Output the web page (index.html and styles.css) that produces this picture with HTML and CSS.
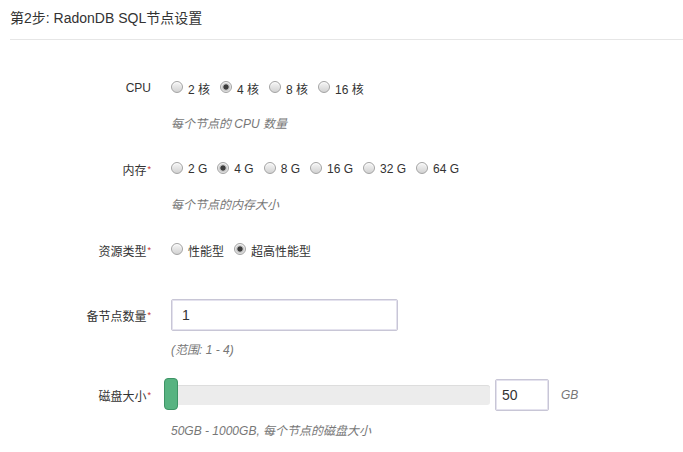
FILE: index.html
```html
<!DOCTYPE html>
<html lang="zh-CN">
<head>
<meta charset="utf-8">
<title>RadonDB SQL节点设置</title>
<link rel="stylesheet" href="styles.css">
</head>
<body>
<div class="step-header">第2步: RadonDB SQL节点设置</div>
<form class="form">
  <div class="group g-cpu">
    <label class="label">CPU</label>
    <div class="controls">
      <div class="radio-line">
        <label class="opt"><input type="radio" name="cpu" class="radio"><span>2 核</span></label>
        <label class="opt"><input type="radio" name="cpu" class="radio" checked><span>4 核</span></label>
        <label class="opt"><input type="radio" name="cpu" class="radio"><span>8 核</span></label>
        <label class="opt"><input type="radio" name="cpu" class="radio"><span>16 核</span></label>
      </div>
      <div class="help help-radio">每个节点的 CPU 数量</div>
    </div>
  </div>
  <div class="group g-mem">
    <label class="label">内存<i class="req">*</i></label>
    <div class="controls">
      <div class="radio-line">
        <label class="opt"><input type="radio" name="mem" class="radio"><span>2 G</span></label>
        <label class="opt"><input type="radio" name="mem" class="radio" checked><span>4 G</span></label>
        <label class="opt"><input type="radio" name="mem" class="radio"><span>8 G</span></label>
        <label class="opt"><input type="radio" name="mem" class="radio"><span>16 G</span></label>
        <label class="opt"><input type="radio" name="mem" class="radio"><span>32 G</span></label>
        <label class="opt"><input type="radio" name="mem" class="radio"><span>64 G</span></label>
      </div>
      <div class="help help-radio">每个节点的内存大小</div>
    </div>
  </div>
  <div class="group g-type">
    <label class="label">资源类型<i class="req">*</i></label>
    <div class="controls">
      <div class="radio-line">
        <label class="opt"><input type="radio" name="type" class="radio"><span>性能型</span></label>
        <label class="opt"><input type="radio" name="type" class="radio" checked><span>超高性能型</span></label>
      </div>
    </div>
  </div>
  <div class="group g-count">
    <label class="label label-input">备节点数量<i class="req">*</i></label>
    <div class="controls">
      <input type="text" class="text-input count-input" value="1">
      <div class="help help-input">(范围: 1 - 4)</div>
    </div>
  </div>
  <div class="group g-disk">
    <label class="label label-input">磁盘大小<i class="req">*</i></label>
    <div class="controls">
      <div class="slider-line">
        <div class="slider">
          <div class="track"></div>
          <div class="thumb"></div>
        </div>
        <input type="text" class="text-input size-input" value="50">
        <span class="unit">GB</span>
      </div>
      <div class="help help-disk">50GB - 1000GB, 每个节点的磁盘大小</div>
    </div>
  </div>
</form>
</body>
</html>
```

FILE: styles.css
```css
html, body {
  margin: 0;
  padding: 0;
  background: #ffffff;
}
body {
  font-family: "Liberation Sans", Arial, "Noto Sans CJK SC", sans-serif;
  color: #333333;
  font-size: 12px;
}
.step-header {
  margin-left: 10px;
  padding-top: 8px;
  padding-bottom: 11px;
  line-height: 20px;
  font-size: 14px;
  color: #333;
  border-bottom: 1px solid #e6e6e6;
}
.form {
  padding-top: 38px;
}
.group {
  display: flex;
  align-items: flex-start;
}
.label {
  width: 141px;
  margin-left: 10px;
  text-align: right;
  line-height: 20px;
  font-size: 12px;
  color: #333;
  flex: none;
}
.label-input {
  line-height: 32px;
}
.req {
  font-style: normal;
  color: #c9302c;
  font-size: 9px;
  vertical-align: 3px;
  margin-left: 1px;
}
.controls {
  margin-left: 20px;
  display: flex;
  flex-direction: column;
}
.radio-line {
  display: flex;
  align-items: center;
  height: 20px;
  gap: 10px;
}
.opt {
  display: flex;
  align-items: center;
  gap: 5px;
  font-size: 12px;
  color: #333;
  white-space: nowrap;
}
.radio {
  appearance: none;
  -webkit-appearance: none;
  margin: 0;
  width: 12px;
  height: 12px;
  box-sizing: border-box;
  border-radius: 50%;
  border: 1px solid #a3a3a3;
  background: linear-gradient(#f6f6f6, #d2d2d2);
  box-shadow: inset 0 1px 1px rgba(255,255,255,0.8);
  position: relative;
  top: -1px;
}
.radio:checked {
  background: radial-gradient(circle, #3c3c3c 0, #3c3c3c 2.2px, #bdbdbd 3px, #e9e9e9 5px);
}
.help {
  font-style: italic;
  color: #777;
  font-size: 12px;
  line-height: 18px;
  white-space: nowrap;
}
.help-radio {
  margin-top: 17px;
}
.help-input {
  margin-top: 10px;
}
.help-disk {
  margin-top: 11px;
}
.g-cpu, .g-mem {
  margin-bottom: 26px;
}
.g-type {
  margin-bottom: 37px;
}
.g-count {
  margin-bottom: 20px;
}
.text-input {
  box-sizing: border-box;
  height: 32px;
  border: 1px solid #c8c6d6;
  border-radius: 2px;
  font-family: "Liberation Sans", Arial, sans-serif;
  font-size: 14px;
  color: #333;
  margin: 0;
  outline: none;
  box-shadow: 0 0 0 1px #e4e2ee inset;
}
.count-input {
  width: 227px;
  padding: 0 10px;
}
.slider-line {
  display: flex;
  align-items: center;
  height: 32px;
}
.slider {
  position: relative;
  width: 319px;
  height: 32px;
  display: flex;
  align-items: center;
}
.track {
  width: 100%;
  height: 20px;
  background: #ececec;
  border-radius: 3px;
  box-shadow: inset 0 1px 0 #dddddd;
}
.thumb {
  position: absolute;
  left: -7px;
  top: -1px;
  width: 14px;
  height: 32px;
  box-sizing: border-box;
  background: #57b381;
  border: 1px solid #3e9466;
  border-radius: 4px;
}
.size-input {
  width: 54px;
  margin-left: 5px;
  padding: 0 6px;
}
.unit {
  margin-left: 12px;
  font-style: italic;
  color: #777;
  font-size: 12px;
}
```
